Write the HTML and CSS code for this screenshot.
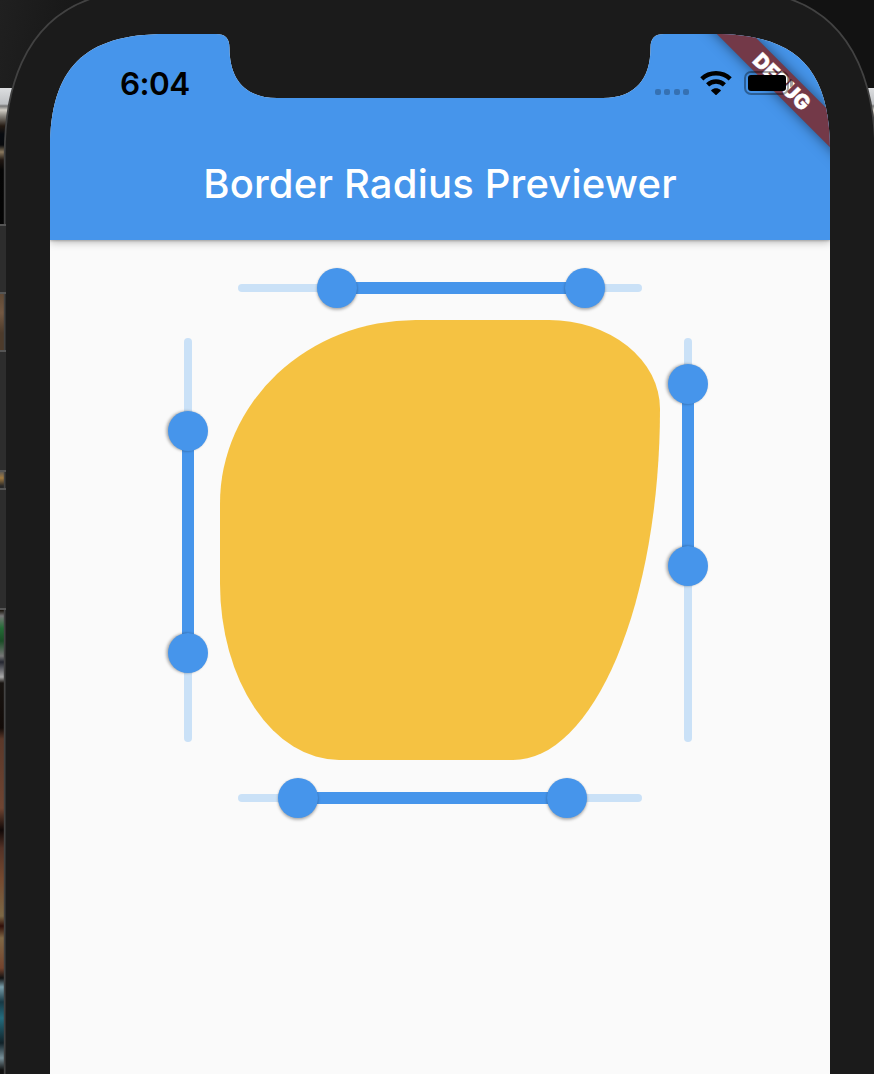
FILE: index.html
```
<!DOCTYPE html>
<html lang="en">
<head>
<meta charset="utf-8">
<title>Border Radius Previewer</title>
<link rel="stylesheet" href="styles.css">
</head>
<body>
<div class="desktop">
  <div class="wallpaper"></div>
  <svg class="frame" viewBox="0 0 874 1074">
    <path class="frame-body" d="M4.7 1080V155C4.7 92 22 23 90 -1L110 -8H770L790 -1C858 23 875.3 92 875.3 155V1080Z"/>
  </svg>
  <div class="hardware">
    <span class="button mute"></span>
    <span class="button volume"></span>
    <span class="button volume"></span>
  </div>
  <main class="screen">
    <header class="app-bar">
      <div class="status">
        <span class="time">6:04</span>
        <div class="indicators">
          <div class="signal"><i></i><i></i><i></i><i></i></div>
          <svg class="wifi" viewBox="0 0 32 24">
            <path class="arc" d="M1.8 7.9C9.6 0.3 22.4 0.3 30.2 7.9"/>
            <path class="arc" d="M7.6 13.9C12.3 9.3 19.7 9.3 24.4 13.9"/>
            <path d="M11.4 19C14 16.7 18 16.7 20.6 19Q21.1 19.5 20.6 20L16.6 23.7Q16 24.2 15.4 23.7L11.4 20Q10.9 19.5 11.4 19Z"/>
          </svg>
          <div class="battery"><span class="charge"></span></div>
        </div>
      </div>
      <h1>Border Radius Previewer</h1>
      <div class="ribbon">DEBUG</div>
    </header>
    <section class="previewer">
      <div class="slider across top"><span class="range" style="left:97px;right:55px"></span><b style="left:97px"></b><b style="left:345px"></b></div>
      <div class="slider down start"><span class="range" style="top:91px;bottom:87px"></span><b style="top:90.7px"></b><b style="top:313px"></b></div>
      <div class="shape"></div>
      <div class="slider down end"><span class="range" style="top:44px;bottom:174px"></span><b style="top:44px"></b><b style="top:226px"></b></div>
      <div class="slider across bottom"><span class="range" style="left:59px;right:73px"></span><b style="left:58.4px"></b><b style="left:327px"></b></div>
    </section>
  </main>
</div>
</body>
</html>
```
FILE: styles.css
```
* { box-sizing: border-box; }
body { margin: 0; background: #1a1a1a; font-family: Inter, Roboto, sans-serif; }
.desktop {
  position: relative;
  width: 874px;
  height: 1074px;
  padding: 34px 44px 0 50px;
  overflow: hidden;
  background: linear-gradient(100deg, #202020, #121212 12%, #121212 88%, #202020);
}
.wallpaper {
  position: absolute;
  inset: 88px 0 0;
  background: linear-gradient(#dcdee0 0, #bfc1c4 16px, #777 18px, #d0ccc4 22px, #88847d 28px,
    #241a12 38px, #080b10 46px, #080a0d 57px, #8b7a60 64px, #201712 72px, #050505 82px,
    #020202 200px, #5f4935 206px, #735842 225px, #4d3b2b 245px, #4d3b2b 262px,
    #555 383px, #a17a40 390px, #272727 398px, #151008 522px, #777 528px, #246c36 540px,
    #1a4d26 553px, #777 568px, #242630 574px, #aaa 589px, #181411 595px, #120b08 640px,
    #5b3829 651px, #704532 720px, #100807 742px, #543226 760px, #75492f 790px,
    #7c6845 828px, #300e08 838px, #806845 850px, #74432d 880px, #111 890px,
    #789da9 899px, #173945 914px, #246c7e 930px, #102128 955px, #789099 970px, #111 982px);
}
.frame { position: absolute; inset: 0; width: 874px; height: 1074px; }
.frame-body { fill: #1b1b1b; stroke: #424242; stroke-width: 1.8; }
.hardware {
  position: absolute;
  left: 0;
  top: 224px;
  width: 6px;
  display: flex;
  flex-direction: column;
}
.button { background: #2d2d2d; border: solid #555; border-width: 2px 0; }
.mute { height: 70px; margin-bottom: 56px; }
.volume { height: 122px; margin-bottom: 16px; }
.screen {
  position: relative;
  width: 780px;
  height: 1040px;
  background: #fafafa;
  clip-path: path("M0 116C0 34 34 0 116 0H166C175 0 179.5 4 179.5 14C179.5 44 194 64 227 64H553C586 64 600.5 44 600.5 14C600.5 4 605 0 614 0H664C746 0 780 34 780 116V1040H0Z");
}
.app-bar {
  position: relative;
  height: 206px;
  background: #4695eb;
  box-shadow: 0 2px 8px rgba(0, 0, 0, .28), 0 1px 2px rgba(0, 0, 0, .2);
}
.status {
  display: flex;
  justify-content: space-between;
  height: 94px;
  padding: 30px 41px 0 70px;
}
.time { font-size: 31.5px; line-height: 40px; font-weight: 600; letter-spacing: -.6px; color: #000; }
.indicators { position: relative; z-index: 2; display: flex; align-items: flex-start; padding-top: 7px; }
.signal { display: flex; gap: 3.4px; margin: 17.5px 11px 0 0; }
.signal i { width: 6px; height: 6px; border-radius: 2px; background: rgba(0, 0, 0, .24); }
.wifi { width: 32px; height: 24px; margin-right: 12px; }
.arc { fill: none; stroke: #000; stroke-width: 4.4; }
.battery {
  position: relative;
  width: 45px;
  height: 24px;
  padding: 2px;
  border: 2px solid rgba(0, 0, 0, .36);
  border-radius: 7px;
}
.battery::after {
  content: "";
  position: absolute;
  right: -6px;
  top: 6px;
  width: 3px;
  height: 8px;
  border-radius: 0 4px 4px 0;
  background: rgba(0, 0, 0, .36);
}
.charge { display: block; width: 38px; height: 16px; border-radius: 3px; background: #000; }
h1 {
  margin: 28px 0 0;
  text-align: center;
  font-size: 40px;
  line-height: 56px;
  font-weight: 500;
  letter-spacing: .18px;
  color: #fff;
  white-space: nowrap;
}
.ribbon {
  position: absolute;
  left: 612px;
  top: 35px;
  width: 240px;
  height: 25px;
  transform: rotate(45deg);
  background: #733948;
  box-shadow: 0 0 13px rgba(0, 0, 0, .5);
  color: #fff;
  font-size: 20.4px;
  font-weight: 900;
  line-height: 25px;
  text-align: center;
  -webkit-text-stroke: .4px #fff;
}
.previewer {
  display: grid;
  grid-template: 40px 440px 40px / 40px 440px 40px;
  padding: 28px 0 0 118px;
}
.shape {
  grid-area: 2 / 2;
  width: 440px;
  height: 440px;
  margin: 12px 0 0 12px;
  background: #f5c242;
  border-radius: 195.5px 111px 147px 119px / 183.7px 88.8px 351.2px 176.6px;
}
.slider { position: relative; }
.across { grid-column: 2; width: 400px; height: 40px; margin-left: 32px; }
.down { grid-row: 2; width: 40px; height: 400px; margin-top: 32px; }
.end { grid-column: 3; margin-left: 20px; }
.start { grid-column: 1; }
.top { grid-row: 1; }
.bottom { grid-row: 3; margin-top: 30px; }
.slider::before { content: ""; position: absolute; background: #cae1f7; border-radius: 4px; }
.across::before { inset: 16px -2px; }
.down::before { inset: -2px 16px; }
.range { position: absolute; background: #4695eb; }
.across .range { top: 14px; height: 12px; }
.down .range { left: 14px; width: 12px; }
.slider b {
  position: absolute;
  width: 40px;
  height: 40px;
  border-radius: 50%;
  background: #4695eb;
  box-shadow: 0 2px 3px rgba(0, 0, 0, .28), 0 0 2px rgba(0, 0, 0, .12);
}
.across b { top: 0; margin-left: -20px; }
.down b { left: 0; margin-top: -20px; box-shadow: -2px 0 3px rgba(0, 0, 0, .28), 0 0 2px rgba(0, 0, 0, .12); }
```
